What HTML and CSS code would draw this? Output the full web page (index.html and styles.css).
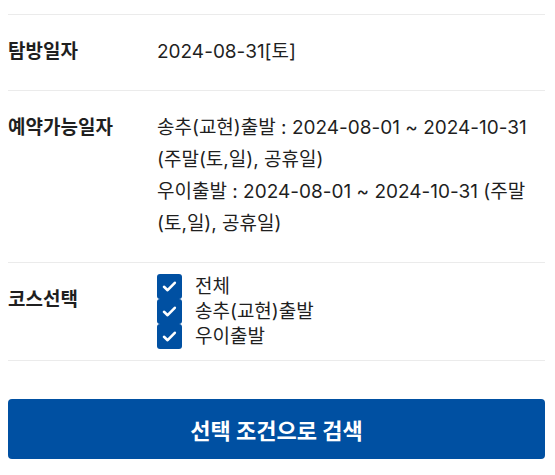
FILE: index.html
```html
<!DOCTYPE html>
<html lang="ko">
<head>
  <meta charset="UTF-8" />
  <meta name="viewport" content="width=device-width, initial-scale=1.0"/>
  <title>탐방 예약 검색</title>
  <link rel="stylesheet" href="styles.css">
</head>
<body>
  <div class="wrap">
    <table class="info">
      <tr>
        <th>탐방일자</th>
        <td>2024-08-31[토]</td>
      </tr>
      <tr>
        <th>예약가능일자</th>
        <td>
          송추(교현)출발 : 2024-08-01 ~ 2024-10-31 (주말(토,일), 공휴일)<br>
          우이출발 : 2024-08-01 ~ 2024-10-31 (주말(토,일), 공휴일)
        </td>
      </tr>
      <tr>
        <th>코스선택</th>
        <td class="courses">
          <label class="check">
            <span class="box"><svg width="25" height="25" viewBox="0 0 25 25"><path d="M7 12.8l3.6 3.4 7.2-7.4" fill="none" stroke="#fff" stroke-width="2.6" stroke-linecap="round" stroke-linejoin="round"/></svg></span>
            전체
          </label>
          <label class="check">
            <span class="box"><svg width="25" height="25" viewBox="0 0 25 25"><path d="M7 12.8l3.6 3.4 7.2-7.4" fill="none" stroke="#fff" stroke-width="2.6" stroke-linecap="round" stroke-linejoin="round"/></svg></span>
            송추(교현)출발
          </label>
          <label class="check">
            <span class="box"><svg width="25" height="25" viewBox="0 0 25 25"><path d="M7 12.8l3.6 3.4 7.2-7.4" fill="none" stroke="#fff" stroke-width="2.6" stroke-linecap="round" stroke-linejoin="round"/></svg></span>
            우이출발
          </label>
        </td>
      </tr>
    </table>

    <button type="button" class="search">선택 조건으로 검색</button>
  </div>
</body>
</html>
```

FILE: styles.css
```css
body {
  margin: 0;
  font-family: Inter, "Noto Sans CJK KR", sans-serif;
  color: #1f1f1f;
  background: #fff;
}
.wrap {
  width: 537px;
  margin-left: 8px;
  padding-top: 14px;
}
.info {
  width: 100%;
  border-collapse: collapse;
  font-size: 19px;
  line-height: 32px;
}
.info tr {
  border-top: 1px solid #ebebeb;
  border-bottom: 1px solid #ebebeb;
}
.info th {
  width: 149px;
  padding: 21px 0 22px;
  text-align: left;
  vertical-align: top;
  font-weight: 700;
}
.info td {
  padding: 21px 0 22px;
  vertical-align: top;
}
.info td.courses {
  padding: 11px 0 11px;
}
.check {
  display: flex;
  align-items: center;
  gap: 13px;
  height: 25px;
  line-height: 25px;
}
.box {
  width: 25px;
  height: 25px;
  background: #0050a2;
  border-radius: 3px;
  display: flex;
}
.search {
  display: block;
  width: 100%;
  height: 60px;
  margin-top: 38px;
  border: none;
  border-radius: 4px;
  background: #0050a2;
  color: white;
  font-family: inherit;
  font-size: 22px;
  font-weight: 700;
  cursor: pointer;
}
```
